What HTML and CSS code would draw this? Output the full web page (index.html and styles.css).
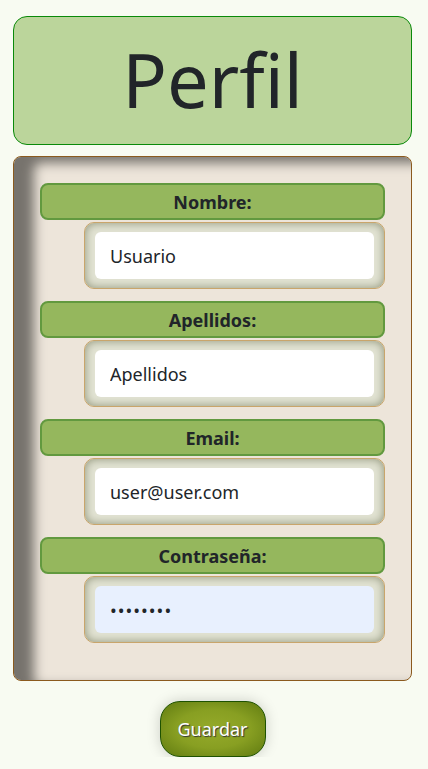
FILE: index.html
```
<!DOCTYPE html>
<html lang="es">
<head>
<meta charset="utf-8">
<title>Perfil</title>
<link rel="stylesheet" href="styles.css">
</head>
<body>
<div class="page">
  <header class="title-box"><h1>Perfil</h1></header>
  <form class="card">
    <div class="field">
      <label class="label">Nombre:</label>
      <div class="wrap"><input class="input" type="text" value="Usuario"></div>
    </div>
    <div class="field">
      <label class="label">Apellidos:</label>
      <div class="wrap"><input class="input" type="text" value="Apellidos"></div>
    </div>
    <div class="field">
      <label class="label">Email:</label>
      <div class="wrap"><input class="input" type="text" value="user@user.com"></div>
    </div>
    <div class="field">
      <label class="label">Contraseña:</label>
      <div class="wrap"><input class="input input-pass" type="password" value="12345678"></div>
    </div>
  </form>
  <div class="actions"><button class="btn" type="button">Guardar</button></div>
</div>
</body>
</html>
```
FILE: styles.css
```
* { box-sizing: border-box; }
html, body { margin: 0; padding: 0; }
body {
  background: #f8fbf2;
  font-family: "Noto Sans", "Open Sans", sans-serif;
  color: #212529;
}
.page {
  padding: 16px 16px 0 13px;
}
.title-box {
  height: 129px;
  background: #bbd59b;
  border: 1px solid #0a8a0a;
  border-radius: 14px;
  display: flex;
  align-items: center;
  justify-content: center;
}
.title-box h1 {
  margin: 0;
  font-weight: 400;
  font-size: 74px;
  line-height: 1;
  position: relative;
  top: -1px;
}
.card {
  margin-top: 11px;
  background: #ede5da;
  border: 1px solid #8b5a1e;
  border-radius: 8px;
  box-shadow: inset 20px 6px 12px #77736d;
  padding: 26px 26px 37px 26px;
  display: flex;
  flex-direction: column;
  gap: 12px;
}
.field {
  display: flex;
  flex-direction: column;
  gap: 2px;
}
.label {
  height: 37px;
  background: #95b75d;
  border: 2px solid #62993f;
  border-radius: 8px;
  display: flex;
  align-items: center;
  justify-content: center;
  font-weight: 700;
  font-size: 18px;
}
.wrap {
  margin-left: 44px;
  height: 67px;
  border: 1px solid #c9a56b;
  border-radius: 10px;
  background: #e2e3d3;
  box-shadow: inset 0 0 10px #8e9378;
  padding: 9px 10px;
}
.input {
  display: block;
  width: 100%;
  height: 47px;
  border: none;
  border-radius: 6px;
  background: #fff;
  padding: 0 15px;
  font-family: inherit;
  font-size: 18px;
  color: #212529;
  outline: none;
}
.input-pass {
  background: #e8f0fe;
  font-size: 18px;
  letter-spacing: 1px;
}
.actions {
  display: flex;
  justify-content: center;
  padding-top: 20px;
}
.btn {
  width: 106px;
  height: 56px;
  border-radius: 20px;
  border: 1px solid #1e5200;
  background: radial-gradient(ellipse at center, #95aa2a 0%, #889f22 50%, #5f7a10 100%);
  box-shadow: 0 0 14px rgba(0,0,0,0.18);
  color: #fff;
  font-family: inherit;
  font-size: 18px;
  text-shadow: 1px 1px 1px #333;
  cursor: pointer;
}
```
